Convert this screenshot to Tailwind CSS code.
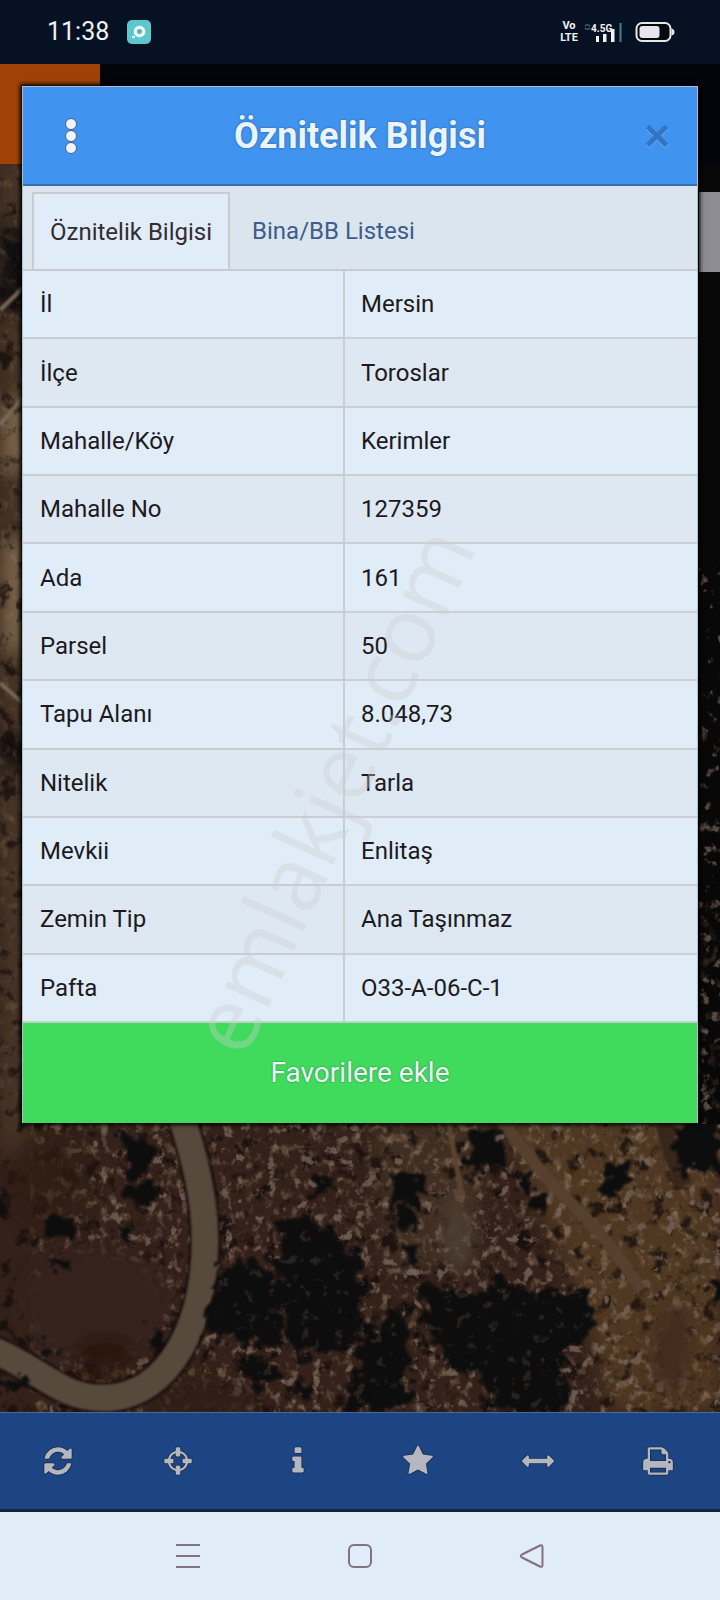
<!DOCTYPE html>
<html lang="tr">
<head>
<meta charset="utf-8">
<meta name="viewport" content="width=device-width, initial-scale=1">
<title>Öznitelik Bilgisi</title>
<script src="https://cdn.jsdelivr.net/npm/@tailwindcss/browser@4"></script>
</head>
<body class="relative flex min-h-screen flex-col overflow-x-hidden bg-black font-[Roboto,sans-serif] text-[24px] text-[#1c1a20]">

<!-- Status bar -->
<header class="flex h-16 items-center justify-between bg-[#061124] pr-[45px] pl-[47px] text-[#f1f2f5]">
  <div class="flex items-center gap-[18px]">
    <time class="text-[25px]">11:38</time>
    <svg class="size-6" viewBox="0 0 24 24" aria-hidden="true">
      <rect width="24" height="24" rx="5" fill="#5ac8cc"/>
      <circle cx="12.5" cy="11.5" r="4.3" fill="none" stroke="#fff" stroke-width="3"/>
      <circle cx="12.5" cy="11.5" r="1.4" fill="#8298a6"/>
      <circle cx="6.5" cy="17" r="1.3" fill="#fff"/>
    </svg>
  </div>
  <div class="flex items-center gap-1">
    <div class="flex w-5 flex-col items-center text-[11px] leading-3 font-bold"><span>Vo</span><span>LTE</span></div>
    <svg class="h-6 w-10" viewBox="0 0 40 24" aria-hidden="true">
      <path d="M2 6a3 2.500 0 0 1 5 0M2 8a3 2.500 0 0 0 5 0" fill="none" stroke="#48666d" stroke-width="1.400"/>
      <text x="8" y="12" font-family="Roboto, sans-serif" font-size="10" font-weight="700" fill="#f1f2f5">4.5G</text>
      <path d="M13 16h3v6h-3zM20 14h3.500v8H20zM28 9h3.500v13H28z" fill="#f1f2f5"/>
      <path d="M36.500 3h2v19h-2z" fill="#47808a"/>
    </svg>
    <svg class="ml-2 h-6 w-10" viewBox="0 0 40 24" aria-hidden="true">
      <rect x="1.500" y="3" width="34" height="18" rx="5.500" fill="#07090f" stroke="#e9e9e1" stroke-width="2"/>
      <rect x="4.500" y="6" width="20" height="12" rx="3" fill="#e6e5ee"/>
      <path d="M36.500 8.500q3 .5 3 3.500t-3 3.500z" fill="#e9e9e1"/>
    </svg>
  </div>
</header>

<main class="relative grow px-[22px] pt-[22px] pb-[289px]">
  <!-- Satellite map under the dimmed backdrop -->
  <svg class="absolute inset-0 h-full w-full" viewBox="0 64 720 1348" preserveAspectRatio="xMidYMid slice" role="img" aria-label="Uydu haritası">
    <defs>
      <filter id="speck" x="0" y="0" width="1" height="1" color-interpolation-filters="sRGB">
        <feTurbulence type="fractalNoise" baseFrequency=".11 .09" numOctaves="5" seed="8"/>
        <feColorMatrix values="0 0 .5 0 .22  0 0 .5 0 .13  0 0 .5 0 .06  3.500 2 0 0 -2.850"/>
        <feGaussianBlur stdDeviation=".6"/>
      </filter>
      <filter id="shade" x="0" y="0" width="1" height="1" color-interpolation-filters="sRGB">
        <feTurbulence type="fractalNoise" baseFrequency=".06" numOctaves="5" seed="21"/>
        <feColorMatrix values="0 0 0 0 .05  0 0 0 0 .03  0 0 0 0 .03  5 3 0 0 -4.300"/>
        <feGaussianBlur stdDeviation=".7"/>
      </filter>
      <filter id="glint" x="0" y="0" width="1" height="1" color-interpolation-filters="sRGB">
        <feTurbulence type="fractalNoise" baseFrequency=".09" numOctaves="4" seed="40"/>
        <feColorMatrix values="0 0 0 0 .46  0 0 0 0 .39  0 0 0 0 .34  6 4 0 0 -5.900"/>
        <feGaussianBlur stdDeviation=".7"/>
      </filter>
      <filter id="rough" x="-.1" y="-.1" width="1.200" height="1.200">
        <feTurbulence type="fractalNoise" baseFrequency=".07" numOctaves="4" seed="3" result="n"/>
        <feDisplacementMap in="SourceGraphic" in2="n" scale="32" xChannelSelector="R" yChannelSelector="G"/>
        <feGaussianBlur stdDeviation="1"/>
      </filter>
      <filter id="soft"><feGaussianBlur stdDeviation="9"/></filter>
      <filter id="edge"><feGaussianBlur stdDeviation="1"/></filter>
    </defs>
    <rect y="64" width="720" height="1348" fill="#33211a"/>
    <g filter="url(#soft)">
      <path d="M0 160h30v1000H0z" fill="#473527"/>
      <path d="M0 400h30v70H0zM0 540h30v110H0z" fill="#776046"/>
      <path d="M0 225h30v90H0zM0 735h30v35H0z" fill="#090808"/>
      <path d="M500 1110h220v302H610q-20-100-60-180z" fill="#4f3723"/>
      <path d="M370 1120h120l-20 140-80 10z" fill="#3f2d22"/>
    </g>
    <rect y="160" width="720" height="1252" filter="url(#shade)" opacity=".65"/>
    <rect x="30" y="1110" width="690" height="302" filter="url(#speck)" opacity=".65"/>
    <rect y="160" width="30" height="950" filter="url(#speck)" opacity=".3"/>
    <rect x="50" y="1110" width="670" height="302" filter="url(#glint)" opacity=".8"/>
    <g filter="url(#soft)">
      <ellipse cx="95" cy="1305" rx="75" ry="60" fill="#35211a"/>
      <ellipse cx="45" cy="1180" rx="45" ry="45" fill="#2d1b15" fill-opacity=".7"/>
      <ellipse cx="105" cy="1355" rx="30" ry="18" fill="#2b1511"/>
      <ellipse cx="210" cy="1398" rx="50" ry="18" fill="#2f1a13"/>
      <ellipse cx="458" cy="1235" rx="15" ry="40" fill="#4c3c33"/>
      <ellipse cx="673" cy="1350" rx="20" ry="45" fill="#432a1b"/>
    </g>
    <g fill="none" filter="url(#edge)">
      <path d="M498 1115q35 50 75 90t68 84" stroke="#59412e" stroke-width="12"/>
      <path d="M448 1120l14 76" stroke="#5b442f" stroke-width="5"/>
      <path d="M663 1115q5 40 22 70" stroke="#38271f" stroke-width="16"/>
      <path d="M179 1110q26 75 26 130c0 80-33 156-100 158-44 1-62-27-112-48" stroke="#17100c" stroke-width="31"/>
      <path d="M179 1110q26 75 26 130c0 80-33 156-100 158-44 1-62-27-112-48" stroke="#584a3d" stroke-width="26"/>
      <path d="M0 310l25-24M0 425l25-30M0 683l25 22" stroke="#786956" stroke-width="4"/>
    </g>
    <g fill="#08080b" filter="url(#rough)">
      <path d="M225 1268q35-22 48 8l10 72-76-12q-4-44 18-68zM278 1225l44-6 38 40 6 55-14 30-60 14-6-50-16-10 14-24z"/>
      <path d="M240 1360l34-8 2 28-28 14zM360 1325l50-14 2 92-64 9zM424 1285l60 5 14-12 30 16 56-4 12 32-34 42 8 48h-80l-8-30-30-14-26-38z"/>
      <path d="M114 1134l38 2 4 34-26 4zM126 1182h30v22h-24zM48 1218h26v18H50zM117 1224h14v14h-14zM50 1262h20v9H50zM150 1330h16v18h-16z"/>
      <path d="M388 1176h34v28h-34zM396 1208l22 4v18h-18zM470 1132h32v38h-32zM518 1176h14v12h-14zM531 1194h14v20h-14zM608 1162h22l-8 38-20-8zM404 1248h14v16h-14z"/>
      <path d="M674 1124h46v48h-40zM712 1276h10v24h-10zM316 1180h16v12h-16zM0 1190h8v28h-8zM0 1375h26v16H0zM40 1345h16v10H40zM290 1380h22v16h-22z"/>
    </g>
    <rect x="215" y="1230" width="380" height="182" filter="url(#glint)" opacity=".25"/>
    <path d="M692 160h28v964h-28z" fill="#090808"/>
    <rect x="692" y="560" width="28" height="564" filter="url(#glint)" opacity=".7"/>
    <rect x="692" y="900" width="28" height="224" filter="url(#speck)" opacity=".3"/>
    <path d="M0 64h720v100H0z" fill="#03050d"/>
    <path d="M0 64h100v100H0z" fill="#a04205"/>
    <path d="M699 192h21v80h-21z" fill="#8d8c93"/>
  </svg>

  <section role="dialog" aria-labelledby="title" class="relative border-x border-t border-[#a9bfd2] bg-[#e0ecf8] shadow-[0_0_4px_2px_#000]">
    <header class="grid h-[99px] grid-cols-[96px_1fr_96px] items-center border-b-2 border-[#3a6cb0] bg-[#4093ee] text-white">
      <button type="button" aria-label="Menü" class="flex h-full items-center justify-center">
        <svg class="h-9 w-4 fill-[#eef5fd]" viewBox="0 0 16 36" stroke="#3d648f" aria-hidden="true"><circle cx="8" cy="6" r="5.500"/><circle cx="8" cy="18" r="5.500"/><circle cx="8" cy="30" r="5.500"/></svg>
      </button>
      <h1 id="title" class="text-center text-[36px] leading-10 font-bold text-[#eaf4ff] [text-shadow:0_0_2px_#254b78]">Öznitelik Bilgisi</h1>
      <button type="button" aria-label="Kapat" class="flex h-full items-center justify-center pl-4">
        <svg class="size-6 overflow-visible fill-none stroke-[#3474c4] stroke-5 drop-shadow-[0_1px_0_#6cb2f5]" viewBox="0 0 24 24" aria-hidden="true"><path d="M2.500 2.500l19 19M21.500 2.500l-19 19"/></svg>
      </button>
    </header>

    <div role="tablist" class="flex h-[85px] items-stretch border-b-2 border-[#c8ccd1] bg-[#dae5ee] pt-[6px] pl-[9px]">
      <button type="button" role="tab" aria-selected="true" class="border-2 border-b-0 border-[#c8ccd1] bg-[#e0ecf8] px-4 text-[#332c33]">Öznitelik Bilgisi</button>
      <button type="button" role="tab" aria-selected="false" class="px-[22px] text-[#3f5c8c]">Bina/BB Listesi</button>
    </div>

    <table class="h-[752px] w-full table-fixed border-separate border-spacing-0 text-left [&_td]:border-b-2 [&_td]:border-[#cccfd3] [&_td]:pl-4 [&_th]:border-r-2 [&_th]:border-b-2 [&_th]:border-[#c9ccd0] [&_th]:pl-[17px] [&_th]:font-normal [&_tr:nth-child(even)]:bg-[#dde8f3] [&_tr:last-child>*]:border-b-[#b9d8c4]">
      <colgroup><col class="w-[322px]"><col></colgroup>
      <tbody>
        <tr><th scope="row">İl</th><td>Mersin</td></tr>
        <tr><th scope="row">İlçe</th><td>Toroslar</td></tr>
        <tr><th scope="row">Mahalle/Köy</th><td>Kerimler</td></tr>
        <tr><th scope="row">Mahalle No</th><td>127359</td></tr>
        <tr><th scope="row">Ada</th><td>161</td></tr>
        <tr><th scope="row">Parsel</th><td>50</td></tr>
        <tr><th scope="row">Tapu Alanı</th><td>8.048,73</td></tr>
        <tr><th scope="row">Nitelik</th><td>Tarla</td></tr>
        <tr><th scope="row">Mevkii</th><td>Enlitaş</td></tr>
        <tr><th scope="row">Zemin Tip</th><td>Ana Taşınmaz</td></tr>
        <tr><th scope="row">Pafta</th><td>O33-A-06-C-1</td></tr>
      </tbody>
    </table>
    <button type="button" class="block h-[100px] w-full bg-[#40db5d] text-[28px] text-[#ecf9f5] [text-shadow:0_0_2px_#2a7048]">Favorilere ekle</button>
  </section>
</main>

<!-- Map tools -->
<nav aria-label="Harita araçları" class="grid h-[100px] grid-cols-6 border-t border-b-3 border-t-[#456a9e] border-b-[#14233c] bg-[#1e4583] [&_button]:flex [&_button]:items-center [&_button]:justify-center [&_button]:pr-1 [&_svg]:size-8 [&_svg]:overflow-visible [&_svg]:fill-[#b4b6c0] [&_svg]:stroke-[#192c48] [&_svg]:stroke-[90] [&_svg]:[paint-order:stroke]">
  <button type="button" aria-label="Yenile"><svg viewBox="0 0 1792 1792"><path d="M1639 1056q0 5-1 7-64 268-268 434.500t-478 166.500q-146 0-282.500-55t-243.500-157l-129 129q-19 19-45 19t-45-19-19-45v-448q0-26 19-45t45-19h448q26 0 45 19t19 45-19 45l-137 137q71 66 161 102t187 36q134 0 250-65t186-179q11-17 53-117 8-23 30-23h192q13 0 22.500 9.500t9.500 22.500zm25-800v448q0 26-19 45t-45 19h-448q-26 0-45-19t-19-45 19-45l138-138q-148-137-349-137-134 0-250 65t-186 179q-11 17-53 117-8 23-30 23h-199q-13 0-22.500-9.500t-9.500-22.500v-7q65-268 270-434.500t480-166.500q146 0 284 55.500t245 156.500l130-129q19-19 45-19t45 19 19 45z"/></svg></button>
  <button type="button" aria-label="Konum"><svg viewBox="0 0 1792 1792"><path d="M1325 1024h-109q-26 0-45-19t-19-45v-128q0-26 19-45t45-19h109q-32-108-112.500-188.500t-188.500-112.500v109q0 26-19 45t-45 19h-128q-26 0-45-19t-19-45v-109q-108 32-188.500 112.500t-112.500 188.500h109q26 0 45 19t19 45v128q0 26-19 45t-45 19h-109q32 108 112.500 188.500t188.500 112.500v-109q0-26 19-45t45-19h128q26 0 45 19t19 45v109q108-32 188.500-112.500t112.500-188.500zm339-192v128q0 26-19 45t-45 19h-143q-37 161-154.500 278.500t-278.500 154.500v143q0 26-19 45t-45 19h-128q-26 0-45-19t-19-45v-143q-161-37-278.500-154.500t-154.500-278.500h-143q-26 0-45-19t-19-45v-128q0-26 19-45t45-19h143q37-161 154.500-278.500t278.500-154.500v-143q0-26 19-45t45-19h128q26 0 45 19t19 45v143q161 37 278.500 154.500t154.500 278.500h143q26 0 45 19t19 45z"/></svg></button>
  <button type="button" aria-label="Bilgi"><svg viewBox="0 0 1792 1792"><path d="M1216 1344v128q0 26-19 45t-45 19h-512q-26 0-45-19t-19-45v-128q0-26 19-45t45-19h64v-384h-64q-26 0-45-19t-19-45v-128q0-26 19-45t45-19h384q26 0 45 19t19 45v576h64q26 0 45 19t19 45zm-128-1152v192q0 26-19 45t-45 19h-256q-26 0-45-19t-19-45v-192q0-26 19-45t45-19h256q26 0 45 19t19 45z"/></svg></button>
  <button type="button" aria-label="Favoriler"><svg viewBox="0 0 1792 1792"><path d="M1728 647q0 22-26 48l-363 354 86 500q1 7 1 20 0 21-10.500 35.500t-30.500 14.500q-19 0-40-12l-449-236-449 236q-22 12-40 12-21 0-31.500-14.500t-10.500-35.500q0-6 2-20l86-500-364-354q-25-27-25-48 0-37 56-46l502-73 225-455q19-41 49-41t49 41l225 455 502 73q56 9 56 46z"/></svg></button>
  <button type="button" aria-label="Ölçüm"><svg viewBox="0 0 1792 1792"><path d="M1792 896q0 26-19 45l-256 256q-19 19-45 19t-45-19-19-45v-128h-1024v128q0 26-19 45t-45 19-45-19l-256-256q-19-19-19-45t19-45l256-256q19-19 45-19t45 19 19 45v128h1024v-128q0-26 19-45t45-19 45 19l256 256q19 19 19 45z"/></svg></button>
  <button type="button" aria-label="Yazdır"><svg viewBox="0 0 1792 1792"><path d="M448 1536h896v-256h-896v256zm0-640h896v-384h-160q-40 0-68-28t-28-68v-160h-640v640zm1152 64q0-26-19-45t-45-19-45 19-19 45 19 45 45 19 45-19 19-45zm128 0v416q0 13-9.500 22.500t-22.500 9.500h-224v160q0 40-28 68t-68 28h-960q-40 0-68-28t-28-68v-160h-224q-13 0-22.500-9.500t-9.500-22.500v-416q0-79 56.500-135.500t135.500-56.500h64v-544q0-40 28-68t68-28h672q40 0 88 20t76 48l152 152q28 28 48 76t20 88v256h64q79 0 135.500 56.500t56.500 135.500z"/></svg></button>
</nav>

<!-- System navigation -->
<nav aria-label="Sistem" class="flex h-[88px] items-center justify-center gap-[148px] bg-[#e0ecf8] [&_svg]:size-6 [&_svg]:overflow-visible [&_svg]:fill-none [&_svg]:stroke-[#83717f] [&_svg]:stroke-2">
  <button type="button" aria-label="Son uygulamalar"><svg viewBox="0 0 24 24"><path d="M0 1h24M0 12h24M0 23h24"/></svg></button>
  <button type="button" aria-label="Ana ekran"><svg viewBox="0 0 24 24"><rect x="1" y="1" width="22" height="22" rx="5"/></svg></button>
  <button type="button" aria-label="Geri"><svg viewBox="0 0 24 24"><path d="M20 1.500L2 10.500q-2.500 1.500 0 3L20 22.500q2.500 1 2.500-1.500V3q0-2.500-2.500-1.500z" stroke-linejoin="round"/></svg></button>
</nav>

<svg class="pointer-events-none absolute inset-0 h-full w-full" viewBox="0 0 720 1600" aria-hidden="true">
  <text transform="translate(245 1060) rotate(-65.600)" font-family="Open Sans, sans-serif" font-size="90" fill="#cdcdcd" fill-opacity=".36">emlakjet.com</text>
</svg>
</body>
</html>
